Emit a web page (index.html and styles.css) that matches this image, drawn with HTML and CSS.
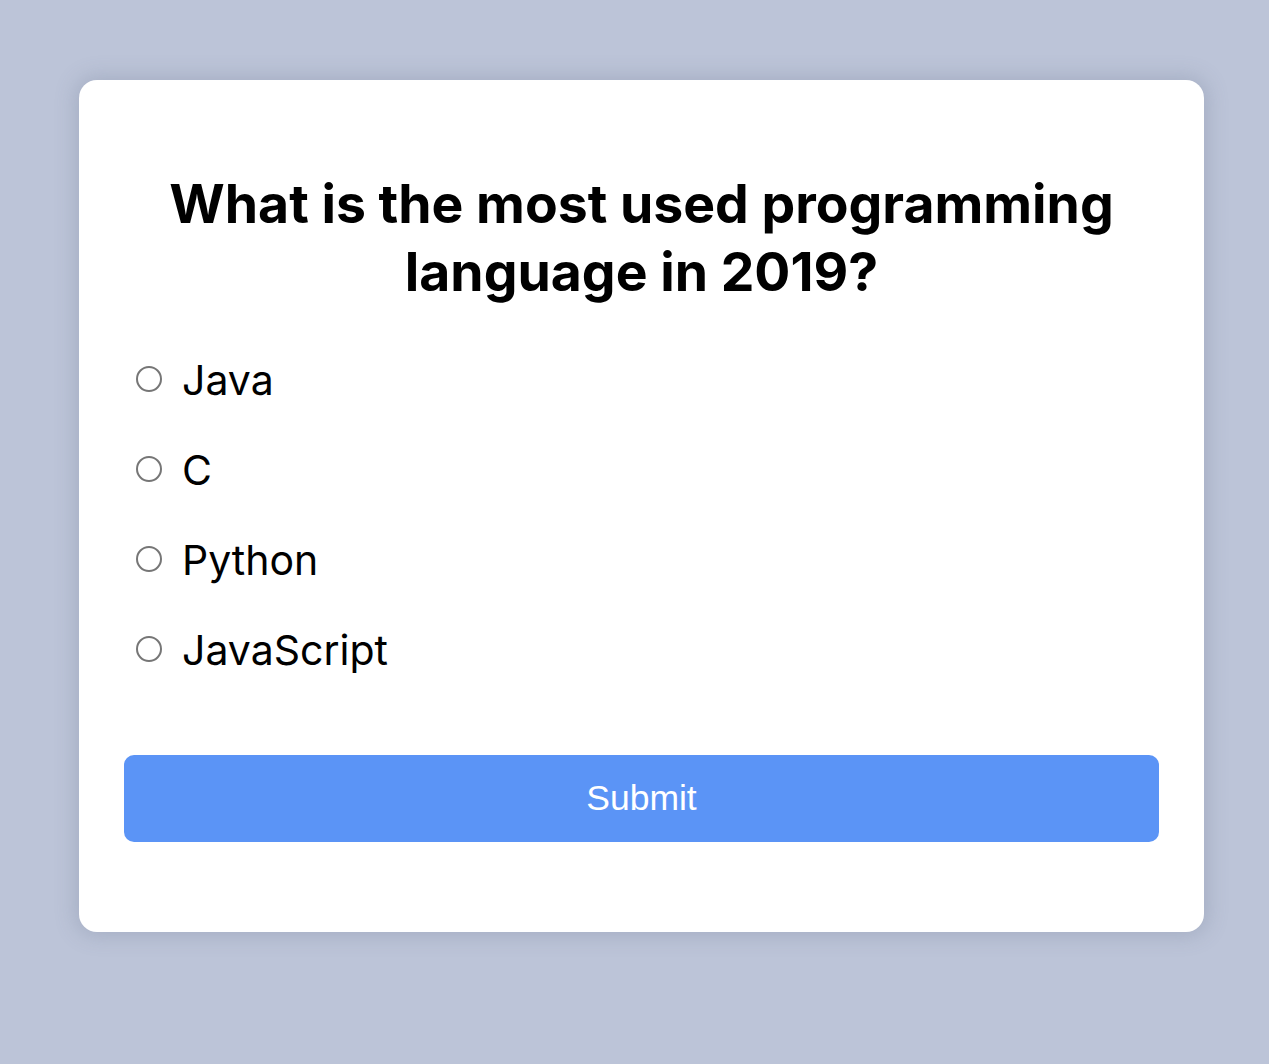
FILE: index.html
```html
<!DOCTYPE html>
<html lang="en">
<head>
<meta charset="utf-8">
<title>Quiz</title>
<link rel="stylesheet" href="styles.css">
</head>
<body>
<div class="quiz">
  <div class="quiz-header">
    <h2 class="question">What is the most used programming language in 2019?</h2>
    <ul class="answers">
      <li class="answer"><input type="radio" name="a" id="a1" class="radio"><label for="a1">Java</label></li>
      <li class="answer"><input type="radio" name="a" id="a2" class="radio"><label for="a2">C</label></li>
      <li class="answer"><input type="radio" name="a" id="a3" class="radio"><label for="a3">Python</label></li>
      <li class="answer"><input type="radio" name="a" id="a4" class="radio"><label for="a4">JavaScript</label></li>
    </ul>
  </div>
  <button class="submit">Submit</button>
</div>
</body>
</html>
```
FILE: styles.css
```css
* { box-sizing: border-box; }
body {
  margin: 0;
  background: #bcc4d8;
  font-family: Inter, "Noto Sans", sans-serif;
  padding-top: 80px;
  min-height: 1064px;
}
.quiz {
  width: 1125px;
  margin: 0 0 0 79px;
  background: #fff;
  border-radius: 18px;
  box-shadow: 0 0 20px 4px rgba(100, 110, 135, 0.25);
  padding: 0 45px 90px;
}
.question {
  margin: 0;
  padding: 90px 0 28px;
  font-size: 53.5px;
  line-height: 68px;
  font-weight: 700;
  text-align: center;
  color: #000;
}
.answers {
  list-style: none;
  margin: 0;
  padding: 0 0 0 12px;
}
.answer {
  display: flex;
  align-items: center;
  height: 90px;
  font-size: 41px;
  color: #000;
}
.answer label { padding-top: 2px; }
.radio {
  appearance: none;
  -webkit-appearance: none;
  flex: none;
  width: 26px;
  height: 26px;
  border: 2px solid #767676;
  border-radius: 50%;
  margin: 0 20px 0 0;
  background: #fff;
}
.submit {
  display: block;
  width: 100%;
  height: 87px;
  margin-top: 61px;
  border: none;
  border-radius: 10px;
  background: #5b94f6;
  color: #fff;
  font-family: "Liberation Sans", Arial, sans-serif;
  font-size: 35.5px;
}
```
